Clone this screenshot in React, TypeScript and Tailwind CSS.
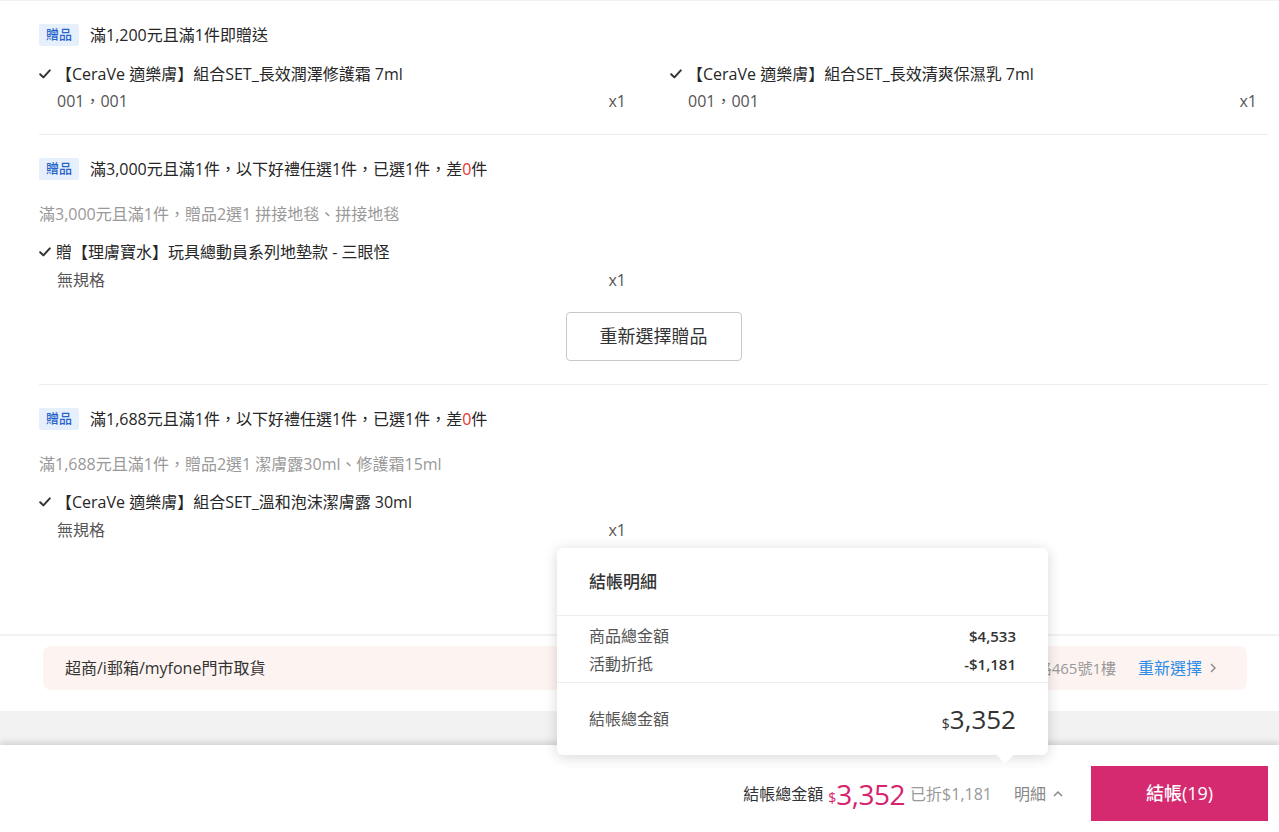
import React from "react";

const FONT = '"Open Sans", "Noto Sans CJK TC", "Noto Sans", sans-serif';

function CheckMark() {
  return (
    <svg width="12" height="10" viewBox="0 0 12 10" className="shrink-0">
      <path d="M1.2 5.2 L4.4 8.4 L10.8 1.4" fill="none" stroke="#333" strokeWidth="2" strokeLinecap="round" strokeLinejoin="round" />
    </svg>
  );
}

function Badge() {
  return (
    <span className="flex h-[22px] w-[40px] items-center justify-center rounded-[2px] bg-[#e6f0fd] text-[13px] font-medium text-[#2563c9]">
      贈品
    </span>
  );
}

function Item({ title, sub, gap = 3 }: { title: string; sub: string; gap?: number }) {
  return (
    <div className="pr-[11px]">
      <div className="flex h-[24px] items-center">
        <CheckMark />
        <span className="ml-[5px] text-[16px] leading-[24px] text-[#262626]">{title}</span>
      </div>
      <div
        className={
          (gap === 3 ? "mt-[3px] " : "mt-[4px] ") +
          "flex h-[24px] items-center justify-between pl-[18px] text-[16px] leading-[24px] text-[#555]"
        }
      >
        <span>{sub}</span>
        <span>x1</span>
      </div>
    </div>
  );
}

function Header({ children }: { children: React.ReactNode }) {
  return (
    <div className="flex h-[22px] items-center">
      <Badge />
      <span className="ml-[11px] text-[16px] leading-[22px] text-[#262626]">{children}</span>
    </div>
  );
}

export default function App() {
  return (
    <div className="relative h-[832px] w-[1279px] overflow-hidden bg-white" style={{ fontFamily: FONT }}>
      <div className="h-[634px] border-t border-[#f0f0f0] pl-[39px] pr-[11px]">
        {/* Section 1 */}
        <div className="border-b border-[#ececec] pb-[21px] pt-[23px]">
          <Header>滿1,200元且滿1件即贈送</Header>
          <div className="mt-[16px] grid grid-cols-[598px_598px] gap-x-[33px]">
            <Item title="【CeraVe 適樂膚】組合SET_長效潤澤修護霜 7ml" sub="001，001" />
            <Item title="【CeraVe 適樂膚】組合SET_長效清爽保濕乳 7ml" sub="001，001" />
          </div>
        </div>
        {/* Section 2 */}
        <div className="border-b border-[#ececec] pb-[23px] pt-[23px]">
          <Header>
            滿3,000元且滿1件，以下好禮任選1件，已選1件，差<span className="text-[#e8332a]">0</span>件
          </Header>
          <div className="mt-[22px] h-[24px] text-[16px] leading-[24px] text-[#999]">
            滿3,000元且滿1件，贈品2選1 拼接地毯、拼接地毯
          </div>
          <div className="mt-[14px] grid grid-cols-[598px_598px] gap-x-[33px]">
            <Item title="贈【理膚寶水】玩具總動員系列地墊款 - 三眼怪" sub="無規格" gap={4} />
          </div>
          <div className="mt-[20px] flex justify-center">
            <button className="h-[49px] w-[176px] rounded-[4px] border border-[#c8c8c8] bg-white text-[18px] text-[#333]">
              重新選擇贈品
            </button>
          </div>
        </div>
        {/* Section 3 */}
        <div className="pt-[23px]">
          <Header>
            滿1,688元且滿1件，以下好禮任選1件，已選1件，差<span className="text-[#e8332a]">0</span>件
          </Header>
          <div className="mt-[22px] h-[24px] text-[16px] leading-[24px] text-[#999]">
            滿1,688元且滿1件，贈品2選1 潔膚露30ml、修護霜15ml
          </div>
          <div className="mt-[14px] grid grid-cols-[598px_598px] gap-x-[33px]">
            <Item title="【CeraVe 適樂膚】組合SET_溫和泡沫潔膚露 30ml" sub="無規格" gap={4} />
          </div>
        </div>
      </div>
      <div className="h-[2px] bg-[#f2f2f2]" />
      {/* Delivery */}
      <div className="pb-[21px] pl-[43px] pr-[32px] pt-[10px]">
        <div className="flex h-[44px] items-center justify-between rounded-[8px] bg-[#fdf3f1] pl-[22px] pr-[29px]">
          <span className="text-[16px] text-[#333]">超商/i郵箱/myfone門市取貨</span>
          <div className="flex items-center">
            <span className="text-[15px] text-[#999]">路465號1樓</span>
            <span className="ml-[22px] text-[16px] text-[#2d8ce6]">重新選擇</span>
            <svg width="10" height="12" viewBox="0 0 10 12" className="ml-[6px]">
              <path d="M3 2 L7 6 L3 10" fill="none" stroke="#888" strokeWidth="1.4" />
            </svg>
          </div>
        </div>
      </div>
      <div className="h-[34px] bg-[#f2f2f2]" />
      {/* Bottom bar */}
      <div className="relative flex h-[87px] items-center justify-end bg-white pr-[11px] pt-[10px] shadow-[0_-3px_6px_rgba(0,0,0,0.13)]">
        <span className="text-[16px] text-[#333]">結帳總金額</span>
        <span className="ml-[5px] mt-[8px] text-[14px] text-[#d6246e]">$</span>
        <span className="text-[28px] leading-[32px] tracking-[-0.5px] text-[#d6246e]">3,352</span>
        <span className="ml-[5px] text-[16px] text-[#999]">已折$1,181</span>
        <span className="ml-[22px] text-[16px] text-[#888]">明細</span>
        <svg width="12" height="10" viewBox="0 0 12 10" className="ml-[6px]">
          <path d="M2 7 L6 3 L10 7" fill="none" stroke="#888" strokeWidth="1.5" />
        </svg>
        <button className="ml-[27px] h-[55px] w-[177px] bg-[#d52a70] text-[18px] font-medium text-white">結帳(19)</button>
      </div>
      {/* Popover */}
      <div className="absolute left-[557px] top-[548px] w-[491px] rounded-[6px] bg-white shadow-[0_2px_14px_rgba(0,0,0,0.16)]">
        <div className="flex h-[68px] items-center border-b border-[#eee] px-[32px]">
          <span className="text-[17px] font-medium text-[#333]">結帳明細</span>
        </div>
        <div className="border-b border-[#eee] px-[32px] pb-[6px] pt-[8px]">
          <div className="flex h-[24px] items-center justify-between">
            <span className="text-[16px] text-[#555]">商品總金額</span>
            <span className="text-[15px] font-semibold text-[#333]">$4,533</span>
          </div>
          <div className="mt-[4px] flex h-[24px] items-center justify-between">
            <span className="text-[16px] text-[#555]">活動折抵</span>
            <span className="text-[15px] font-semibold text-[#333]">-$1,181</span>
          </div>
        </div>
        <div className="flex h-[72px] items-center justify-between px-[32px]">
          <span className="text-[16px] text-[#555]">結帳總金額</span>
          <span className="flex items-baseline text-[#333]">
            <span className="text-[14px]">$</span>
            <span className="text-[26px] leading-[32px]">3,352</span>
          </span>
        </div>
        <div className="absolute -bottom-[6px] right-[37px] h-[12px] w-[12px] rotate-45 bg-white" />
      </div>
    </div>
  );
}
